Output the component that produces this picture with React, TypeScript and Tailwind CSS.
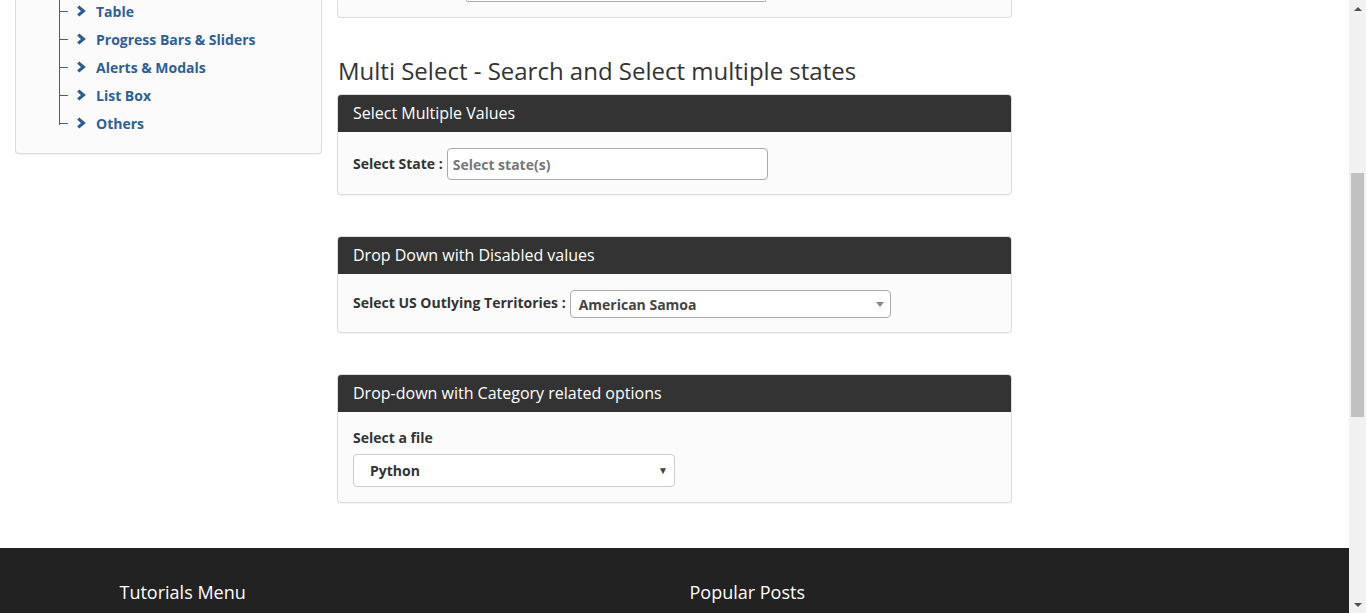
import React from "react";

const menu = ["Table", "Progress Bars & Sliders", "Alerts & Modals", "List Box", "Others"];

const Chevron = () => (
  <svg viewBox="0 0 10 12" className="w-[10px] h-[12px]">
    <path d="M2.2 1.6 L7.4 6 L2.2 10.4" fill="none" stroke="#2d5b92" strokeWidth="3.2" />
  </svg>
);

const Panel = ({ title, children }: { title: string; children: React.ReactNode }) => (
  <div className="border border-[#dcdcdc] rounded-[4px] bg-[#fbfbfb] shadow-[0_1px_1px_rgba(0,0,0,0.05)]">
    <div className="h-[37px] bg-[#333333] rounded-t-[3px] px-[15px] pb-[2px] flex items-center text-white text-[16px]">
      {title}
    </div>
    {children}
  </div>
);

export default function App() {
  return (
    <div className="h-[613px] overflow-hidden flex bg-white font-['Open_Sans',sans-serif] text-[#333]">
      <div className="w-[1349px] flex flex-col">
        <div className="flex">
          {/* sidebar */}
          <div className="ml-[15px] w-[307px] h-[154px] border-x border-b border-[#dcdcdc] rounded-b-[4px] bg-[#fbfbfb] shadow-[0_1px_1px_rgba(0,0,0,0.05)]">
            <div className="ml-[43px] -mt-[3px] border-l border-[#3c6391] h-[128px]">
              {menu.map((m) => (
                <div key={m} className="h-[28px] flex items-center">
                  <span className="w-[8px] border-t border-[#3c6391]" />
                  <span className="ml-[8px] flex items-center">
                    <Chevron />
                  </span>
                  <span className="ml-[10px] text-[14px] font-bold text-[#2f5f98]">{m}</span>
                </div>
              ))}
            </div>
          </div>

          {/* main column */}
          <div className="ml-[15px] w-[675px]">
            <div className="h-[18px] border-x border-b border-[#dcdcdc] rounded-b-[4px] bg-[#fbfbfb]">
              <div className="ml-[128px] w-[300px] h-[2px] border-x border-b border-[#aaaaaa] rounded-b-[3px] bg-white" />
            </div>

            <h2 className="mt-[39px] mb-[10px] pl-[1px] text-[24px] leading-[27px] font-normal text-[#333]">
              Multi Select - Search and Select multiple states
            </h2>

            <Panel title="Select Multiple Values">
              <div className="px-[15px] pt-[16px] pb-[14px] flex items-center">
                <span className="text-[14px] font-bold -mt-[2px]">Select State :</span>
                <div className="ml-[4px] w-[321px] h-[32px] border border-[#aaaaaa] rounded-[4px] bg-white flex items-center px-[5px] text-[14px] font-bold text-[#777]">
                  Select state(s)
                </div>
              </div>
            </Panel>

            <div className="h-[41px]" />

            <Panel title="Drop Down with Disabled values">
              <div className="px-[15px] pt-[16px] pb-[14px] flex items-center">
                <span className="text-[14px] font-bold -mt-[3px]">Select US Outlying Territories :</span>
                <div className="ml-[4px] w-[321px] h-[28px] border border-[#aaaaaa] rounded-[4px] bg-white flex items-center justify-between pl-[8px] pr-[6px] text-[14px] font-bold text-[#444]">
                  <span className="mt-[1px]">American Samoa</span>
                  <span className="w-0 h-0 border-x-[4px] border-x-transparent border-t-[5px] border-t-[#888]" />
                </div>
              </div>
            </Panel>

            <div className="h-[41px]" />

            <Panel title="Drop-down with Category related options">
              <div className="px-[15px] pt-[16px] pb-[15px]">
                <div className="text-[14px] leading-[20px] font-bold">Select a file</div>
                <div className="mt-[6px] w-[322px] h-[33px] border border-[#cccccc] rounded-[4px] bg-white flex items-center justify-between pl-[16px] pr-[6px] text-[14px] font-bold text-[#333]">
                  <span>Python</span>
                  <span className="text-[10px] text-[#444]">▼</span>
                </div>
              </div>
            </Panel>
          </div>
        </div>

        {/* footer */}
        <div className="mt-[45px] flex-1 bg-[#222222]">
          <div className="w-[1140px] mx-auto flex pt-[31px]">
            <div className="w-[570px] px-[15px] text-white text-[18px]">Tutorials Menu</div>
            <div className="w-[570px] px-[15px] text-white text-[18px]">Popular Posts</div>
          </div>
        </div>
      </div>

      {/* browser scrollbar */}
      <div className="w-[17px] bg-[#f1f1f1] flex flex-col items-center">
        <div className="h-[17px] flex items-center justify-center">
          <span className="w-0 h-0 border-x-[4px] border-x-transparent border-b-[4px] border-b-[#505050]" />
        </div>
        <div className="mt-[156px] w-[13px] h-[244px] bg-[#c1c1c1]" />
        <div className="flex-1" />
        <div className="h-[17px] flex items-center justify-center">
          <span className="w-0 h-0 border-x-[4px] border-x-transparent border-t-[4px] border-t-[#505050]" />
        </div>
      </div>
    </div>
  );
}
